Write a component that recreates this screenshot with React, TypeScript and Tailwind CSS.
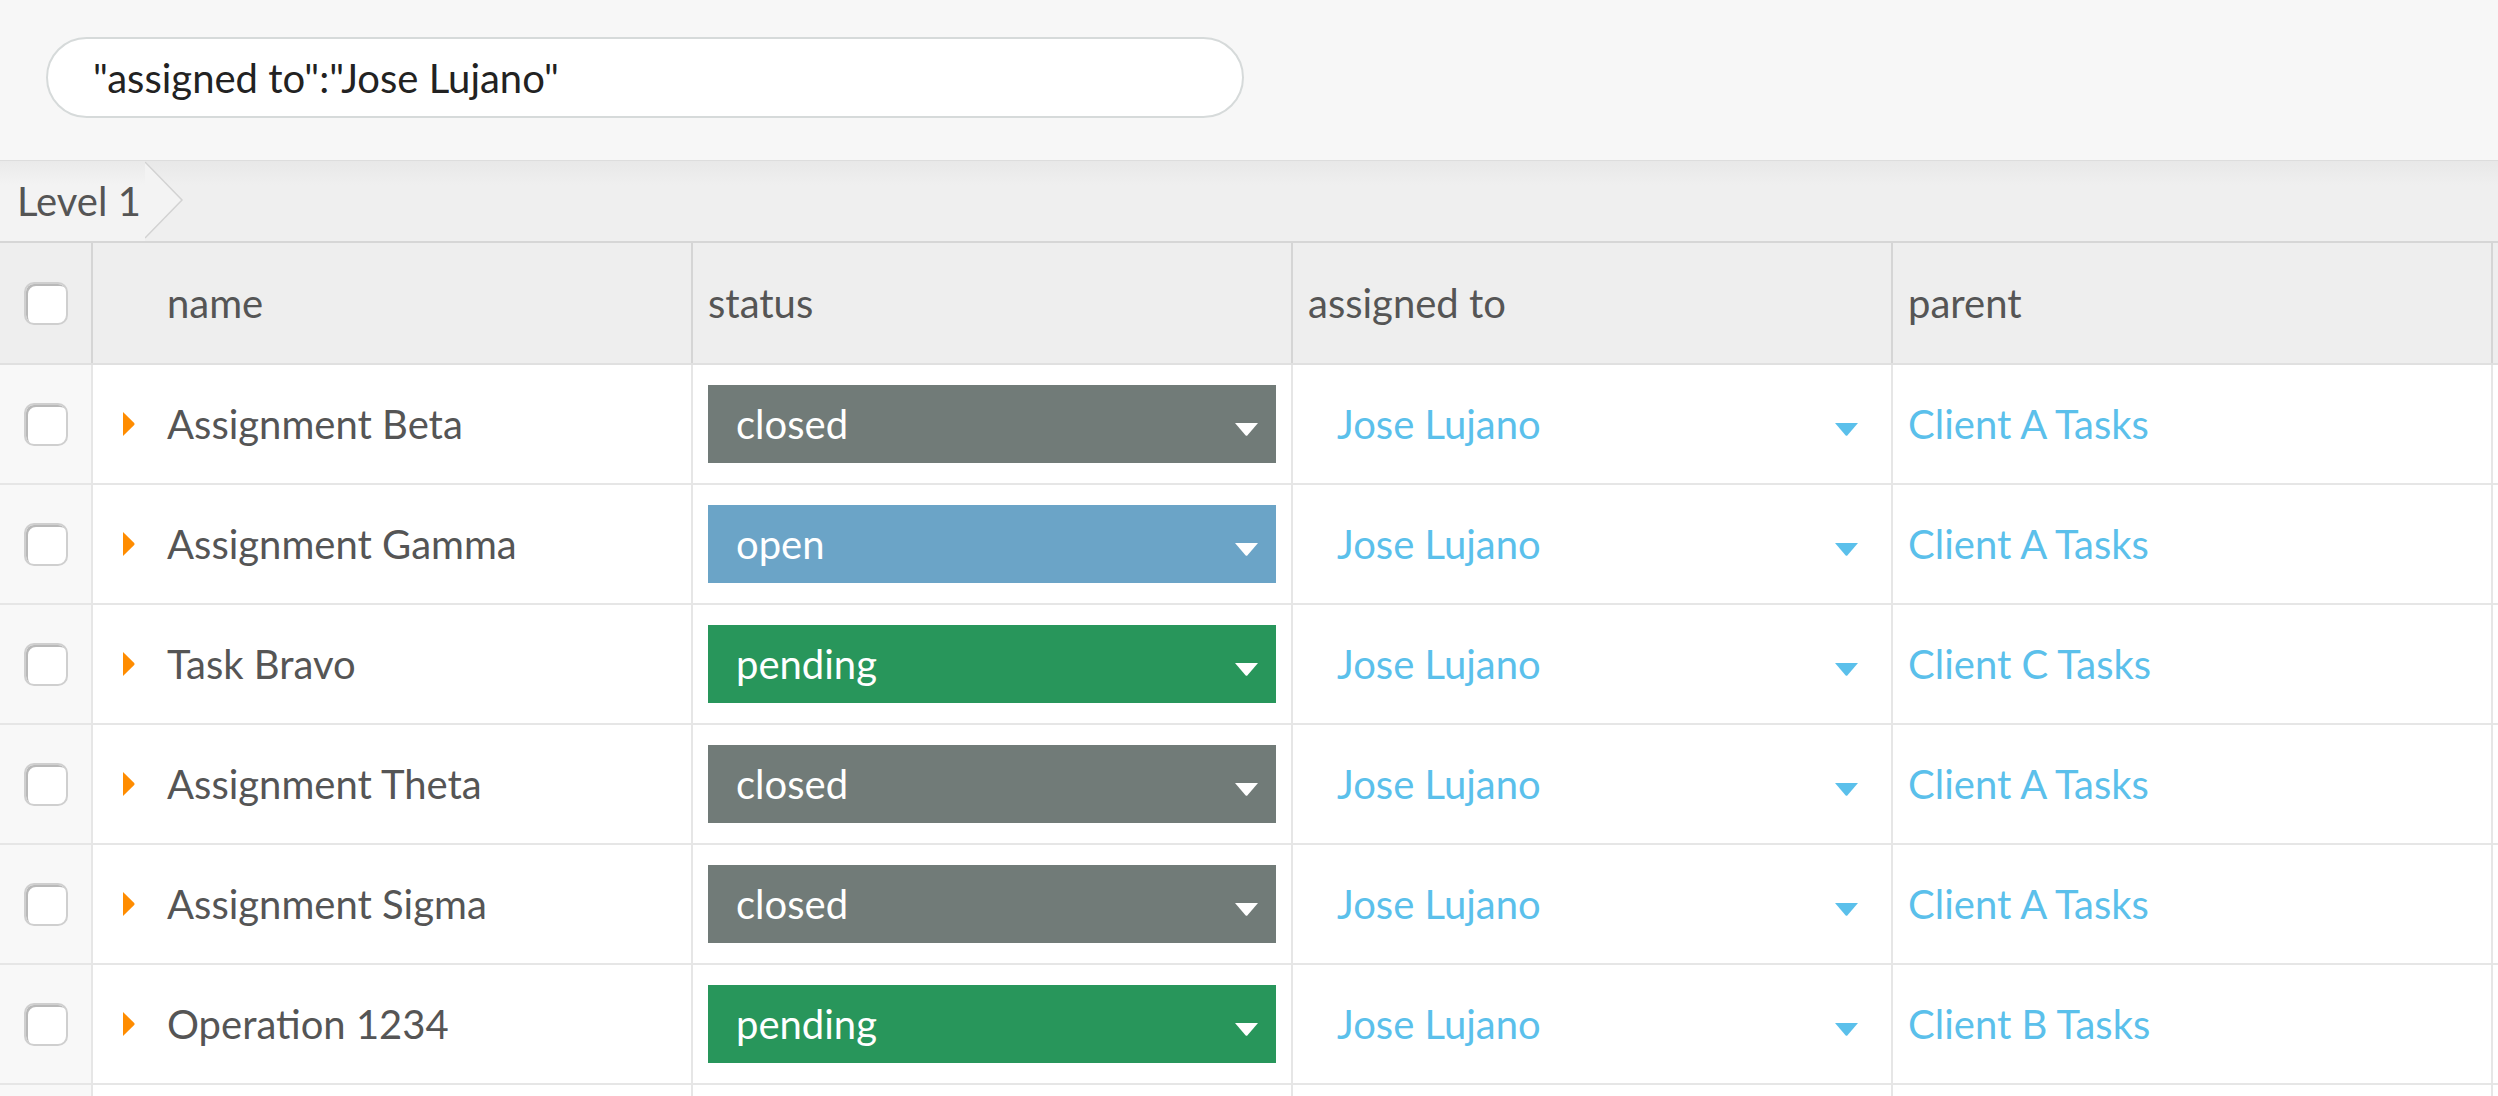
import React from 'react'

type Status = 'closed' | 'open' | 'pending'

type Row = {
  name: string
  status: Status
  assignee: string
  parent: string
}

const rows: Row[] = [
  { name: 'Assignment Beta', status: 'closed', assignee: 'Jose Lujano', parent: 'Client A Tasks' },
  { name: 'Assignment Gamma', status: 'open', assignee: 'Jose Lujano', parent: 'Client A Tasks' },
  { name: 'Task Bravo', status: 'pending', assignee: 'Jose Lujano', parent: 'Client C Tasks' },
  { name: 'Assignment Theta', status: 'closed', assignee: 'Jose Lujano', parent: 'Client A Tasks' },
  { name: 'Assignment Sigma', status: 'closed', assignee: 'Jose Lujano', parent: 'Client A Tasks' },
  { name: 'Operation 1234', status: 'pending', assignee: 'Jose Lujano', parent: 'Client B Tasks' },
]

const statusBg: Record<Status, string> = {
  closed: 'bg-[#717b78]',
  open: 'bg-[#6ba4c7]',
  pending: 'bg-[#28965b]',
}

function Caret({ className }: { className: string }) {
  return (
    <svg width="23" height="13" viewBox="0 0 23 13" className={className}>
      <path d="M0 0 H23 L12.3 12.4 Q11.5 13.2 10.7 12.4 Z" fill="currentColor" />
    </svg>
  )
}

function Expander() {
  return (
    <svg width="12" height="24" viewBox="0 0 12 24" className="text-[#ff8c00] shrink-0">
      <path d="M0 0 L11.2 11 Q12 12 11.2 13 L0 24 Z" fill="currentColor" />
    </svg>
  )
}

function Checkbox() {
  return (
    <div className="w-[44px] h-[43px] rounded-[10px] bg-white border-2 border-[#cfcfcf] shadow-[inset_2px_2px_0_#b9b9b9]" />
  )
}

export default function App() {
  return (
    <div className="h-screen w-full overflow-hidden bg-white font-['Lato',sans-serif] text-[40px] text-[#555]">
      {/* Search header */}
      <header className="h-[161px] bg-[#f7f7f7] border-b border-[#dddddd] pt-[37px] pl-[46px]">
        <div className="w-[1198px] h-[81px] rounded-full bg-white border-2 border-[#d6dada] flex items-center pl-[45px] text-[#222]">
          "assigned to":"Jose Lujano"
        </div>
      </header>

      {/* Breadcrumb */}
      <div className="h-[82px] flex bg-[linear-gradient(to_bottom,#e8e8e8,#efefef_30%)] border-b-2 border-[#d6d6d6]">
        <div className="flex items-center pl-[17px] pr-[4px] bg-[linear-gradient(to_bottom,#eaeaea,#f3f3f3_30%)] leading-none">
          Level 1
        </div>
        <svg width="40" height="80" viewBox="0 0 40 80" className="shrink-0">
          <polygon points="0,0 37,39 0,78" fill="#f3f3f3" />
          <polyline points="0,1 37,39 0,77" fill="none" stroke="#d2d2d2" strokeWidth="1.5" />
        </svg>
      </div>

      {/* Table */}
      <div className="flex flex-col">
        <div className="flex h-[122px] bg-[#eeeeee] border-b-2 border-[#e0e0e0]">
          <div className="w-[93px] shrink-0 border-r-2 border-[#d5d5d5] flex items-center pl-[24px]">
            <Checkbox />
          </div>
          <div className="w-[600px] shrink-0 border-r-2 border-[#d5d5d5] flex items-center pl-[74px]">name</div>
          <div className="w-[600px] shrink-0 border-r-2 border-[#d5d5d5] flex items-center pl-[15px]">status</div>
          <div className="w-[600px] shrink-0 border-r-2 border-[#d5d5d5] flex items-center pl-[15px]">assigned to</div>
          <div className="w-[600px] shrink-0 border-r-2 border-[#d5d5d5] flex items-center pl-[15px]">parent</div>
          <div className="flex-1" />
        </div>

        {rows.map((r, i) => (
          <div key={i} className="flex h-[120px] shrink-0 border-b-2 border-[#e6e6e6]">
            <div className="w-[93px] shrink-0 bg-[#f8f8f8] border-r-2 border-[#e6e6e6] flex items-center pl-[24px]">
              <Checkbox />
            </div>
            <div className="w-[600px] shrink-0 border-r-2 border-[#e6e6e6] flex items-center pl-[30px] gap-[32px]">
              <Expander />
              <span>{r.name}</span>
            </div>
            <div className="w-[600px] shrink-0 border-r-2 border-[#e6e6e6] flex items-center pl-[15px] pr-[15px]">
              <div className={`w-full h-[78px] ${statusBg[r.status]} flex items-center justify-between pl-[28px] pr-[18px] text-white`}>
                <span>{r.status}</span>
                <Caret className="text-white mt-[10px]" />
              </div>
            </div>
            <div className="w-[600px] shrink-0 border-r-2 border-[#e6e6e6] flex items-center justify-between pl-[44px] pr-[33px] text-[#5bc0eb]">
              <span>{r.assignee}</span>
              <Caret className="text-[#5bc0eb] mt-[10px]" />
            </div>
            <div className="w-[600px] shrink-0 border-r-2 border-[#e6e6e6] flex items-center pl-[15px] text-[#5bc0eb]">
              {r.parent}
            </div>
            <div className="flex-1" />
          </div>
        ))}

        {/* next row, cut off by the window */}
        <div className="flex h-[120px] shrink-0">
          <div className="w-[93px] shrink-0 bg-[#f8f8f8] border-r-2 border-[#e6e6e6]" />
          <div className="w-[600px] shrink-0 border-r-2 border-[#e6e6e6]" />
          <div className="w-[600px] shrink-0 border-r-2 border-[#e6e6e6]" />
          <div className="w-[600px] shrink-0 border-r-2 border-[#e6e6e6]" />
          <div className="w-[600px] shrink-0 border-r-2 border-[#e6e6e6]" />
          <div className="flex-1" />
        </div>
      </div>
    </div>
  )
}
